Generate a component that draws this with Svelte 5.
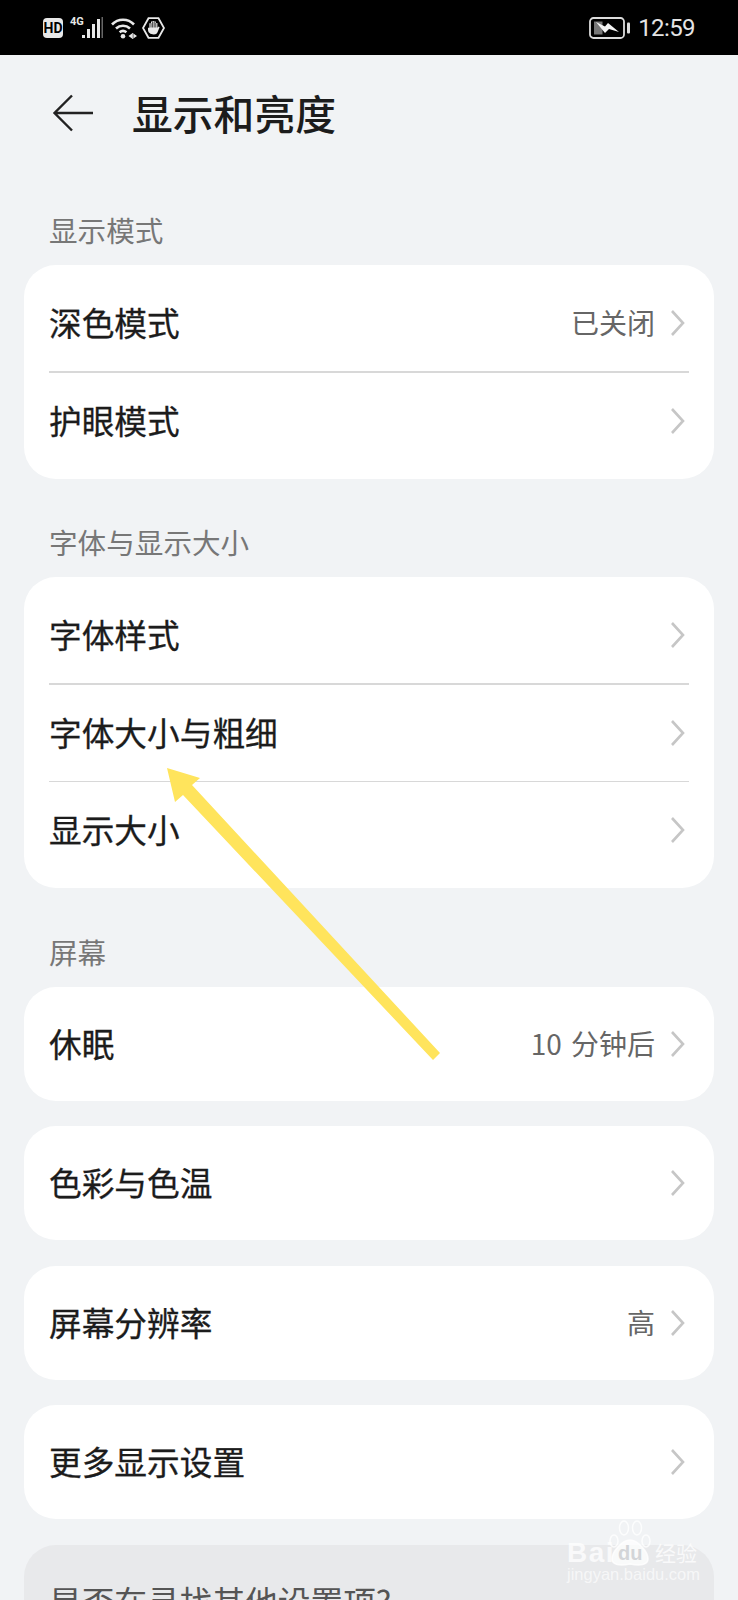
<script>
  const sections = [
    {
      label: '显示模式',
      rows: [
        { name: '深色模式', value: '已关闭' },
        { name: '护眼模式' },
      ],
    },
    {
      label: '字体与显示大小',
      rows: [
        { name: '字体样式' },
        { name: '字体大小与粗细' },
        { name: '显示大小' },
      ],
    },
    {
      label: '屏幕',
      rows: [{ name: '休眠', value: '10 分钟后' }],
    },
    { rows: [{ name: '色彩与色温' }] },
    { rows: [{ name: '屏幕分辨率', value: '高' }] },
    { rows: [{ name: '更多显示设置' }] },
  ]
</script>

<div class="page">
  <div class="status">
    <div class="status-left">
      <span class="hd">HD</span>
      <div class="net">
        <span class="net-type">4G</span>
        <svg width="21" height="21" viewBox="0 0 21 21" fill="#e8e8e8">
          <rect x="0" y="18" width="3" height="3" />
          <rect x="5" y="12" width="3" height="9" />
          <rect x="10" y="7" width="3" height="14" />
          <rect x="15" y="2" width="3" height="19" />
          <rect x="19.5" y="0" width="1.5" height="21" fill="#666" />
        </svg>
      </div>
      <svg class="wifi" width="26" height="22" viewBox="0 0 26 22" fill="none" stroke="#e8e8e8" stroke-width="2.6">
        <path d="M1 7.5C7 1.2 17 1.2 23 7.5" />
        <path d="M5 11.5C9 7.8 15 7.8 19 11.5" />
        <path d="M8.6 15.2C10.6 13.6 13.4 13.6 15.4 15.2" />
        <circle cx="12" cy="19.3" r="2.3" fill="#e8e8e8" stroke="none" />
        <path d="M21.7 16V22" stroke-width="1" />
        <path d="M21 16.5V21.5L17.5 19ZM22.4 16.5V21.5L26 19Z" fill="#e8e8e8" stroke="none" />
      </svg>
      <svg class="hand" width="23" height="22" viewBox="0 0 23 22">
        <path d="M6.5 1.2H16.5L22 11L16.5 20.8H6.5L1 11Z" fill="none" stroke="#e8e8e8" stroke-width="1.8" />
        <path d="M6 10.8H7.4V6.2H9V4.6H10.6V4H12.2V4.6H13.8V6H15.4V10.8L16.6 9.4L17.6 10.2L15.4 15.4C14.8 16.6 13.8 17.4 11.8 17.4C8.4 17.4 6 15.6 6 12.8Z" fill="#e8e8e8" />
        <path d="M9 6.2V10.5M10.6 4.6V10.5M12.2 4.6V10.5M13.8 6V10.5" stroke="#000" stroke-width="0.7" />
      </svg>
    </div>
    <div class="status-right">
      <div class="battery">
        <svg width="41" height="22" viewBox="0 0 41 22">
          <rect x="1" y="1" width="34" height="20" rx="3.5" fill="none" stroke="#dcdcdc" stroke-width="1.8" />
          <rect x="5" y="4.5" width="8.5" height="13" fill="#777" />
          <path d="M7 5L16 9.5L19 6L30 15L20 12L16 16Z" fill="#f4f4f4" />
          <rect x="38" y="5.5" width="3" height="11" rx="1" fill="#dcdcdc" />
        </svg>
      </div>
      <span class="time">12:59</span>
    </div>
  </div>

  <header class="head">
    <svg width="42" height="38" viewBox="0 0 42 38" fill="none" stroke="#222" stroke-width="2.4">
      <path d="M20 1.5L2.5 19L20 36.5M2.5 19H41" />
    </svg>
    <h1>显示和亮度</h1>
  </header>

  <main class="list">
    {#each sections as section}
      {#if section.label}
        <div class="label">{section.label}</div>
      {/if}
      <div class="card">
        {#each section.rows as row, i}
          {#if i > 0}<div class="divider"></div>{/if}
          <div class="row">
            <span class="name">{row.name}</span>
            {#if row.value}<span class="value">{row.value}</span>{/if}
            <svg class="chev" width="15" height="28" viewBox="0 0 15 28" fill="none" stroke="#c6c6c6" stroke-width="2.6">
              <path d="M2 2L13 14L2 26" />
            </svg>
          </div>
        {/each}
      </div>
    {/each}
    <div class="more">是否在寻找其他设置项?</div>
  </main>

  <svg class="marker" width="738" height="1600" viewBox="0 0 738 1600">
    <path d="M167 768L200 778L192 785L440 1053L433 1060L183 795L175 802Z" fill="#ffe45c" />
  </svg>

  <div class="mark">
    <svg class="paw" width="44" height="50" viewBox="0 0 44 50" fill="none" stroke="#fff" stroke-opacity="0.8" stroke-width="1.5">
      <ellipse cx="6" cy="23" rx="4" ry="6" />
      <ellipse cx="16" cy="10" rx="4.5" ry="7" />
      <ellipse cx="29" cy="10" rx="4.5" ry="7" />
      <ellipse cx="38" cy="23" rx="4" ry="6" />
      <path d="M22 22C14 22 4 34 4 41C4 47 12 48 22 46C32 48 40 47 40 41C40 34 30 22 22 22Z" fill="#fff" fill-opacity="0.75" />
    </svg>
    <span class="bai">Bai</span>
    <span class="du">du</span>
    <span class="jy">经验</span>
    <span class="url">jingyan.baidu.com</span>
  </div>
</div>

<style>
  :global(body) {
    margin: 0;
    background: #f1f3f5;
  }

  .page {
    position: relative;
    width: 738px;
    height: 1600px;
    overflow: hidden;
    background: #f1f3f5;
    font-family: "Noto Sans CJK SC", "Noto Sans", sans-serif;
    color: #1c1c1c;
  }

  .status {
    height: 55px;
    box-sizing: border-box;
    background: #000;
    padding: 0 43px;
    display: flex;
    justify-content: space-between;
    align-items: center;
  }

  .status-left,
  .status-right {
    display: flex;
    align-items: center;
  }

  .hd {
    width: 20px;
    height: 20px;
    border-radius: 4px;
    background: #e8e8e8;
    color: #000;
    font: 700 14px/20px Roboto, sans-serif;
    text-align: center;
  }

  .net {
    position: relative;
    display: flex;
    align-items: flex-end;
    margin-left: 7px;
    padding-left: 12px;
    height: 21px;
  }

  .net-type {
    position: absolute;
    left: 0;
    top: -1px;
    color: #e8e8e8;
    font: 700 11px/11px Roboto, sans-serif;
  }

  .wifi {
    margin-left: 8px;
  }

  .hand {
    margin-left: 5px;
  }

  .battery {
    display: flex;
    margin-right: 8px;
  }

  .time {
    color: #e4e4e4;
    font: 400 24px/30px Roboto, sans-serif;
    letter-spacing: -0.6px;
  }

  .head {
    height: 111.5px;
    box-sizing: border-box;
    padding: 37px 0 0 52px;
    display: flex;
    align-items: flex-start;
    gap: 38px;
  }

  .head svg {
    margin-top: 2px;
  }

  h1 {
    margin: 0;
    font-size: 40.8px;
    line-height: 42px;
    font-weight: 500;
  }

  .list {
    padding: 0 24px;
  }

  .label {
    margin: 43.5px 0 15px 25px;
    font-size: 28.6px;
    line-height: 40px;
    color: #777;
  }

  .card {
    background: #fff;
    border-radius: 32px;
    padding: 10px 25px;
  }

  .card:has(+ .card),
  .card:has(+ .more) {
    margin-bottom: 25.5px;
  }

  .row {
    height: 94px;
    display: flex;
    align-items: center;
    gap: 15px;
  }

  .divider + .row,
  .row:has(+ .divider) {
    height: 96px;
  }

  .name {
    flex: 1;
    font-size: 32.7px;
    font-weight: 400;
    -webkit-text-stroke: 0.3px #1c1c1c;
    padding-bottom: 3px;
  }

  .value {
    font-size: 28px;
    color: #666;
    word-spacing: 3px;
    padding-bottom: 2px;
  }

  .chev {
    flex: none;
    margin-right: 4px;
  }

  .divider {
    height: 1.5px;
    background: #d8d8d8;
  }

  .more {
    background: #e8e9eb;
    border-radius: 32px;
    height: 120px;
    padding: 34px 25px 0;
    box-sizing: border-box;
    font-size: 32.7px;
    line-height: 44px;
    color: #555;
  }

  .marker {
    position: absolute;
    inset: 0;
    pointer-events: none;
  }

  .mark {
    position: absolute;
    left: 566px;
    top: 1518px;
    width: 134px;
    height: 66px;
    color: rgba(255, 255, 255, 0.75);
  }

  .mark span {
    position: absolute;
    white-space: nowrap;
  }

  .paw {
    position: absolute;
    left: 42px;
    top: 0;
  }

  .bai {
    left: 1px;
    top: 19.5px;
    font: 700 28px/30px "Liberation Sans", sans-serif;
    letter-spacing: 1.5px;
  }

  .du {
    left: 52px;
    top: 20px;
    font: 700 20px/30px "Liberation Sans", sans-serif;
    color: #d3d5d8;
  }

  .jy {
    left: 89px;
    top: 19px;
    font: 400 21px/30px "Noto Sans CJK SC", sans-serif;
  }

  .url {
    left: 1px;
    top: 48px;
    font: 400 16.5px/16px "Liberation Sans", sans-serif;
    color: rgba(255, 255, 255, 0.65);
  }
</style>
